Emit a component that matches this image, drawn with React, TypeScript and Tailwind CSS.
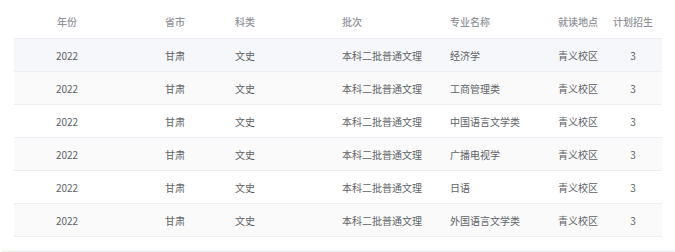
import React from "react";

// 招生计划表
const rows = [
  { major: "经济学", bg: "bg-[#f5f7fa]" },
  { major: "工商管理类", bg: "bg-[#fafafa]" },
  { major: "中国语言文学类", bg: "bg-white" },
  { major: "广播电视学", bg: "bg-[#fafafa]" },
  { major: "日语", bg: "bg-white" },
  { major: "外国语言文学类", bg: "bg-[#fafafa]" },
];

const cols = "grid grid-cols-[106px_105px_107px_108px_108px_56px_58px]";

export default function App() {
  return (
    <div
      className="w-[675px] h-[252px] bg-white text-[10px] overflow-hidden"
      style={{ fontFamily: '"Noto Sans CJK SC", "Liberation Sans", sans-serif' }}
    >
      <div className="ml-[14px] w-[648px]">
        {/* Header */}
        <div className={`${cols} h-[39px] border-b border-[#ebeef5] text-[#909399] font-medium items-center pt-[5px]`}>
          <div className="text-center">年份</div>
          <div className="pl-[45px]">省市</div>
          <div className="pl-[10px]">科类</div>
          <div className="pl-[10px]">批次</div>
          <div className="pl-[10px]">专业名称</div>
          <div className="pl-[10px] whitespace-nowrap">就读地点</div>
          <div className="text-center whitespace-nowrap">计划招生</div>
        </div>

        {/* Body */}
        {rows.map((r, i) => (
          <div
            key={i}
            className={`${cols} h-[33px] border-b border-[#ebeef5] text-[#606266] items-center ${r.bg}`}
          >
            <div className="text-center">2022</div>
            <div className="pl-[45px]">甘肃</div>
            <div className="pl-[10px]">文史</div>
            <div className="pl-[10px] whitespace-nowrap">本科二批普通文理</div>
            <div className="pl-[10px] whitespace-nowrap">{r.major}</div>
            <div className="pl-[10px] whitespace-nowrap">青义校区</div>
            <div className="text-center">3</div>
          </div>
        ))}
      </div>
      <div className="mt-[14px] ml-[1px] h-px bg-[#ebeef5] rounded-l" />
    </div>
  );
}
